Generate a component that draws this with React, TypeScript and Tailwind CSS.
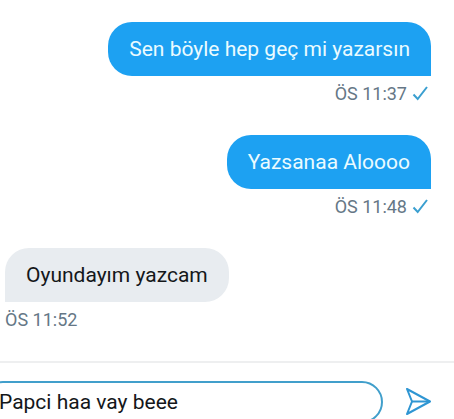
import React, { useState } from 'react';
import clsx from 'clsx';

interface Message {
  id: number;
  text: string;
  time: string;
  sent: boolean;
}

const messages: Message[] = [
  { id: 1, text: 'Sen böyle hep geç mi yazarsın', time: 'ÖS 11:37', sent: true },
  { id: 2, text: 'Yazsanaa Aloooo', time: 'ÖS 11:48', sent: true },
  { id: 3, text: 'Oyundayım yazcam', time: 'ÖS 11:52', sent: false },
];

function CheckIcon() {
  return (
    <svg width="16" height="16" viewBox="0 0 16 16" fill="none" stroke="#3a9fd0" strokeWidth="2" aria-hidden="true">
      <path d="M1.5 8.5 5.7 13 15 1" />
    </svg>
  );
}

function SendIcon() {
  return (
    <svg
      width="26"
      height="28"
      viewBox="0 0 26 28"
      fill="none"
      stroke="#2f96d3"
      strokeWidth="2"
      strokeLinejoin="round"
      aria-hidden="true"
    >
      <path d="M2 1 25 13.5 2 26 7 13.5Z" />
      <path d="M7 13.5H25" />
    </svg>
  );
}

function MessageItem({ message }: { message: Message }) {
  return (
    <li className={clsx('flex flex-col', message.sent ? 'items-end' : 'items-start')}>
      <p
        className={clsx(
          'rounded-t-[24px] px-[21px] py-[13px] text-[21px] leading-[28px]',
          message.sent ? 'rounded-bl-[24px] bg-[#1da1f2] text-[#eafbff]' : 'rounded-br-[24px] bg-[#e8ecf0] text-[#14171a]',
        )}
      >
        {message.text}
      </p>
      <div className={clsx('mt-[6px] flex items-center gap-[5px] text-[18px] leading-[24px] text-[#657786]', message.sent && 'pr-[3px]')}>
        <time>{message.time}</time>
        {message.sent && <CheckIcon />}
      </div>
    </li>
  );
}

export default function App() {
  const [draft, setDraft] = useState('Papci haa vay beee');

  return (
    <main className="flex h-screen flex-col overflow-hidden bg-white font-[Roboto,sans-serif]">
      {/* Conversation */}
      <ul className="flex shrink-0 flex-col gap-[29px] pt-[22px] pr-[23px] pb-[29px] pl-[5px]">
        {messages.map((message) => (
          <MessageItem key={message.id} message={message} />
        ))}
      </ul>

      {/* Composer */}
      <form
        className="-ml-[18px] flex shrink-0 items-center gap-[22px] border-t-2 border-[#eeeff0] pt-[18px] pr-[23px]"
        onSubmit={(e) => e.preventDefault()}
      >
        <input
          type="text"
          aria-label="Mesaj"
          value={draft}
          onChange={(e) => setDraft(e.target.value)}
          className="h-[42px] min-w-0 flex-1 rounded-full border-2 border-[#419fcb] bg-white px-[15px] text-[21px] leading-[28px] text-[#14171a] outline-none"
        />
        <button type="submit" aria-label="Gönder" className="shrink-0">
          <SendIcon />
        </button>
      </form>
    </main>
  );
}
